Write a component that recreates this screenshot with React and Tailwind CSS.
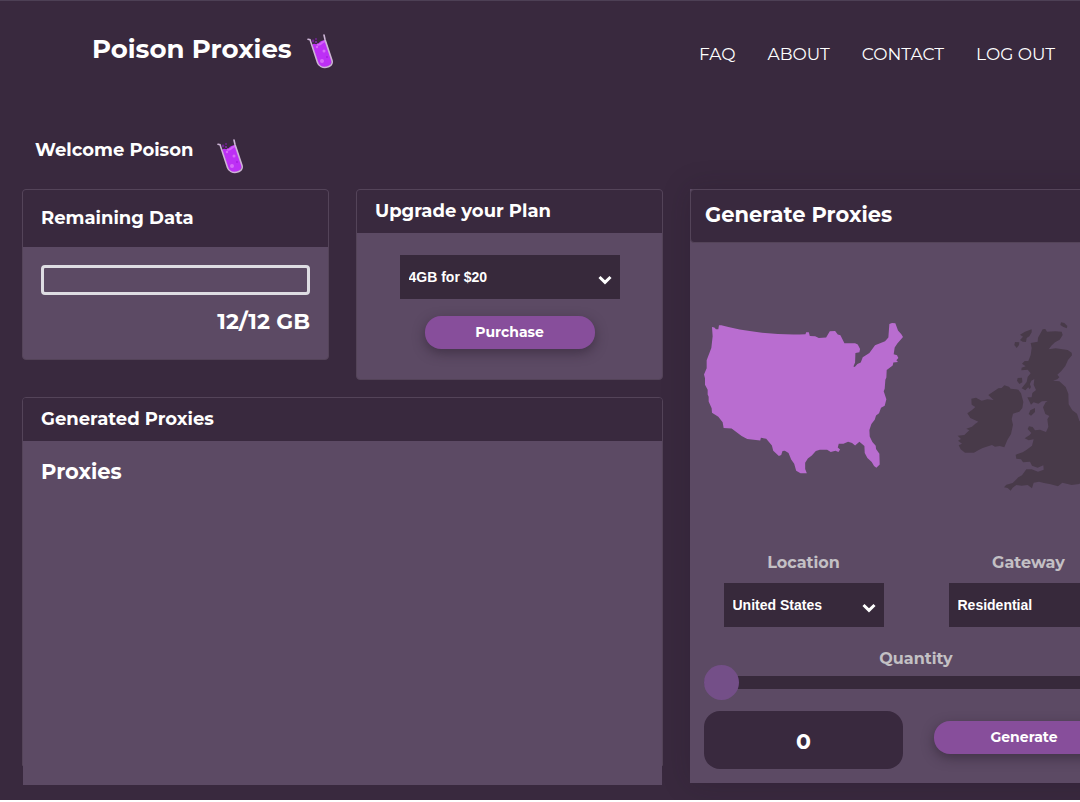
import React, { useState } from "react";

function Potion() {
  return (
    <svg width="26" height="36" viewBox="0 0 26 36" fill="none" aria-hidden="true">
      <path d="M5 11 C8 8 9 12 12 9 C14 6 16 7 18.5 6 L24.6 26 C26 33 14 37 11 29 Z" fill="#bd30f5" />
      <path d="M10 10 C12 12 14 10 16 8 L18 7" stroke="#d360fb" strokeWidth="2" />
      <path d="M1 5.2 L3 5.6 L10.5 28.5 C13 36.5 27 34 25 26.5 L18 5.5 L17 1" stroke="#cdb5d6" strokeWidth="1.6" strokeLinecap="round" />
      <circle cx="15" cy="27" r="2" fill="#d769f8" />
      <circle cx="17" cy="17" r="1.5" fill="#d769f8" />
      <circle cx="10" cy="13" r="1.2" fill="#d769f8" />
      <circle cx="20" cy="23" r="1" fill="#a91de0" />
      <circle cx="6" cy="7" r="1.4" fill="#702391" />
      <circle cx="9" cy="5" r="1" fill="#702391" />
      <circle cx="9" cy="8" r="1.1" fill="#8428aa" />
    </svg>
  );
}

function UnitedStates() {
  return (
    <svg width="199" height="153" viewBox="26 37 598 458" role="img" aria-label="United States">
      <path
        fill="#b96dd0"
        d="M50 51 L57 53 L62 58 L69 58 L71 46 L78 46 Q130 60 195 68 Q265 76 331 73 L333 67 L341 67 L344 78 L360 79 L371 84 L393 83 L404 64 L420 63 L428 74 L436 76 L448 100 L480 100 L488 104 L495 117 L493 127 L481 129 L480 158 L475 170 L479 171 L487 162 L497 158 L503 142 L523 129 L540 106 L570 94 L580 83 L583 42 L591 39 L601 40 L609 62 L619 73 L624 81 L607 101 L599 113 L596 133 L606 136 L610 144 L604 151 L609 156 L595 158 L593 167 L575 180 L574 203 L571 210 L569 237 L566 244 L574 268 L569 288 L558 294 L552 310 L543 317 L539 330 L529 343 L523 361 L524 380 L532 397 L542 408 L543 418 L553 432 L554 464 L544 474 L537 469 L530 457 L517 445 L509 430 L508 409 L493 396 L480 407 L471 400 L459 396 L445 402 L431 402 L428 413 L435 419 L430 427 L421 423 L407 427 L396 420 L374 420 L362 424 L350 437 L338 446 L330 459 L330 478 L335 491 L316 491 L303 483 L297 462 L288 449 L280 430 L269 423 L262 424 L258 436 L251 439 L234 423 L230 407 L213 387 L197 384 L195 392 L156 388 L139 379 L109 356 L85 355 L82 337 L69 321 L50 309 L49 295 L40 275 L40 261 L37 254 L37 240 L29 225 L29 205 L26 194 L34 175 L34 151 L48 114 L52 79 Z"
      />
    </svg>
  );
}

function UnitedKingdom() {
  return (
    <svg width="143" height="169" viewBox="54 37 429 507" role="img" aria-label="United Kingdom">
      <g fill="#483a49">
        <path d="M311 59 L319 58 L324 66 L349 65 L368 66 L371 76 L362 90 L348 98 L337 108 L329 119 L350 116 L386 121 L398 129 L399 137 L387 151 L379 169 L367 184 L355 195 L361 203 L355 209 L342 213 L361 215 L380 232 L388 252 L389 284 L400 302 L414 312 L421 333 L435 348 L447 376 L441 391 L450 402 L470 399 L482 413 L478 440 L461 461 L447 478 L470 486 L449 506 L420 523 L398 526 L386 523 L370 519 L357 530 L335 524 L315 520 L300 516 L284 519 L279 536 L266 526 L248 528 L232 526 L221 534 L215 543 L206 535 L195 533 L202 525 L221 520 L238 503 L249 497 L262 479 L278 479 L297 486 L314 480 L313 467 L296 474 L279 468 L273 456 L252 458 L246 449 L232 447 L230 435 L251 428 L263 420 L279 408 L284 389 L269 392 L257 386 L272 376 L277 370 L266 358 L270 350 L281 352 L288 362 L303 360 L321 367 L328 352 L325 329 L331 319 L319 313 L312 293 L320 278 L326 274 L309 275 L298 282 L284 278 L276 285 L265 263 L278 263 L280 250 L291 241 L284 225 L286 208 L277 213 L269 231 L259 242 L248 236 L263 217 L266 202 L275 191 L266 180 L247 182 L248 174 L260 170 L249 162 L257 154 L268 154 L275 136 L278 115 L275 100 L296 96 L297 84 Z" />
        <path d="M178 236 L188 235 L196 227 L210 231 L215 237 L238 240 L246 251 L253 277 L250 295 L241 306 L222 312 L218 329 L222 345 L216 373 L205 391 L196 413 L182 409 L168 411 L159 406 L131 415 L119 421 L105 429 L78 429 L65 419 L59 407 L69 402 L57 393 L66 388 L56 378 L76 376 L91 362 L82 357 L99 351 L109 342 L118 336 L94 325 L85 311 L99 301 L109 292 L98 285 L97 267 L111 264 L128 273 L145 269 L164 271 L148 256 Z" />
        <path d="M278 59 L278 68 L271 80 L263 85 L261 97 L251 96 L243 91 L252 81 L243 75 L258 66 Z" />
        <path d="M228 97 L241 98 L240 106 L233 115 L226 106 Z" />
        <path d="M236 205 L249 204 L250 218 L241 223 L234 213 Z" />
        <path d="M270 218 L276 232 L272 239 L265 229 Z" />
        <path d="M288 295 L288 307 L276 318 L269 313 L274 302 Z" />
        <path d="M366 38 L376 40 L385 49 L383 56 L372 51 L364 46 Z" />
      </g>
    </svg>
  );
}

function Select({ options, className, ...props }) {
  return (
    <div className={`relative ${className}`}>
      <select
        {...props}
        className="block h-11 w-full appearance-none bg-[#37293b] pr-8 pl-[9px] font-['Liberation_Sans',sans-serif] text-sm font-bold text-white outline-none"
      >
        {options.map((o) => (
          <option key={o}>{o}</option>
        ))}
      </select>
      <svg className="pointer-events-none absolute top-5 right-2" width="14" height="10" viewBox="0 0 14 10" fill="none" aria-hidden="true">
        <path d="M1.5 2 L7 7.3 L12.5 2" stroke="#fff" strokeWidth="3" />
      </svg>
    </div>
  );
}

const buttonStyle =
  "h-[33px] rounded-2xl bg-[#874e9b] pb-0.5 text-sm font-bold text-white shadow-[0_4px_12px_rgba(40,28,44,0.5)]";

export default function App() {
  const [quantity, setQuantity] = useState(0);
  return (
    <div className="overflow-x-hidden border-t border-[#4d4055] bg-[#39293e] pb-[17px] font-[Montserrat,Inter,sans-serif] text-white">
      <header className="flex items-start justify-between pr-[25px] pl-[92px]">
        <div className="flex items-start gap-[15px] pt-[33px]">
          <h1 className="text-[26px] leading-[30px] font-bold">Poison Proxies</h1>
          <Potion />
        </div>
        <nav className="flex gap-8 pt-[41px] text-[17px] leading-6">
          <a href="#faq">FAQ</a>
          <a href="#about">ABOUT</a>
          <a href="#contact">CONTACT</a>
          <a href="#logout">LOG OUT</a>
        </nav>
      </header>

      <div className="flex items-start gap-6 pt-[69px] pl-[35px]">
        <h2 className="text-lg leading-[22px] font-bold">Welcome Poison</h2>
        <Potion />
      </div>

      <main className="grid min-w-[1164px] grid-cols-[307fr_307fr_452fr] items-start gap-x-[27px] px-[22px] pt-[14px]">
        <div className="col-span-2">
          <div className="grid grid-cols-2 items-start gap-[27px]">
            <section className="rounded border border-[#544459] bg-[#5c4a64]">
              <h3 className="rounded-t-[3px] bg-[#39293e] px-[18px] pt-[17px] pb-[18px] text-lg leading-[22px] font-bold">Remaining Data</h3>
              <div className="px-[18px] pt-[18px] pb-[23px]">
                <div role="progressbar" aria-label="Remaining data" aria-valuenow={0} className="h-[30px] rounded border-3 border-[#dedde3]" />
                <p className="pt-[13px] text-right text-[22px] leading-7 font-bold">12/12 GB</p>
              </div>
            </section>

            <section className="rounded border border-[#544459] bg-[#5c4a64]">
              <h3 className="rounded-t-[3px] bg-[#39293e] px-[18px] pt-[10px] pb-[11px] text-lg leading-[22px] font-bold">Upgrade your Plan</h3>
              <div className="flex flex-col items-center gap-[17px] pt-[22px] pb-[30px]">
                <Select aria-label="Plan" options={["4GB for $20", "8GB for $40"]} className="w-[220px]" />
                <button type="button" className={`${buttonStyle} w-[170px]`}>Purchase</button>
              </div>
            </section>
          </div>

          <section className="mt-[17px] h-[369px] rounded-t border border-[#544459]">
            <h3 className="rounded-t-[3px] bg-[#39293e] px-[18px] pt-[10px] pb-[11px] text-lg leading-[22px] font-bold">Generated Proxies</h3>
            <div className="h-[344px] bg-[#5c4a64] px-[18px] pt-[17px]">
              <h4 className="text-[21px] leading-7 font-bold">Proxies</h4>
            </div>
          </section>
        </div>

        <section className="bg-[#5c4a64] shadow-[0_0_28px_rgba(30,20,34,0.2)]">
          <h3 className="rounded border border-[#544459] bg-[#39293e] px-[14px] pt-[11px] pb-[13px] text-[21px] leading-7 font-bold">Generate Proxies</h3>
          <div className="px-[14px] pb-[14px]">
            <div className="grid grid-cols-2 gap-x-[26px]">
              <div className="flex h-[308px] justify-center pt-[79px]"><UnitedStates /></div>
              <div className="flex h-[308px] justify-center pt-[79px]"><UnitedKingdom /></div>
              <div className="flex flex-col items-center gap-2">
                <label htmlFor="location" className="text-base leading-6 font-bold text-[#c3c0c4]">Location</label>
                <Select id="location" options={["United States", "United Kingdom"]} className="w-40" />
              </div>
              <div className="flex flex-col items-center gap-2">
                <label htmlFor="gateway" className="text-base leading-6 font-bold text-[#c3c0c4]">Gateway</label>
                <Select id="gateway" options={["Residential", "Datacenter"]} className="w-40" />
              </div>
            </div>
            <label htmlFor="quantity" className="block pt-5 text-center text-base leading-6 font-bold text-[#c3c0c4]">Quantity</label>
            <input
              id="quantity"
              type="range"
              min="0"
              max="100"
              value={quantity}
              onChange={(e) => setQuantity(Number(e.target.value))}
              className="mt-[-6px] block h-[35px] w-full appearance-none bg-transparent outline-none [&::-webkit-slider-runnable-track]:h-[13px] [&::-webkit-slider-runnable-track]:rounded-full [&::-webkit-slider-runnable-track]:bg-[#37293b] [&::-webkit-slider-thumb]:mt-[-11px] [&::-webkit-slider-thumb]:size-[35px] [&::-webkit-slider-thumb]:appearance-none [&::-webkit-slider-thumb]:rounded-full [&::-webkit-slider-thumb]:bg-[#744f88]"
            />
            <div className="flex items-start gap-[31px] pt-[11px]">
              <input
                type="text"
                inputMode="numeric"
                aria-label="Quantity value"
                value={quantity}
                onChange={(e) => setQuantity(Number(e.target.value) || 0)}
                className="h-[58px] w-[199px] rounded-2xl bg-[#39293e] pt-0.5 text-center text-[22px] font-bold text-white outline-none"
              />
              <button type="button" className={`${buttonStyle} mt-[10px] w-[180px]`}>Generate</button>
            </div>
          </div>
        </section>
      </main>
    </div>
  );
}
